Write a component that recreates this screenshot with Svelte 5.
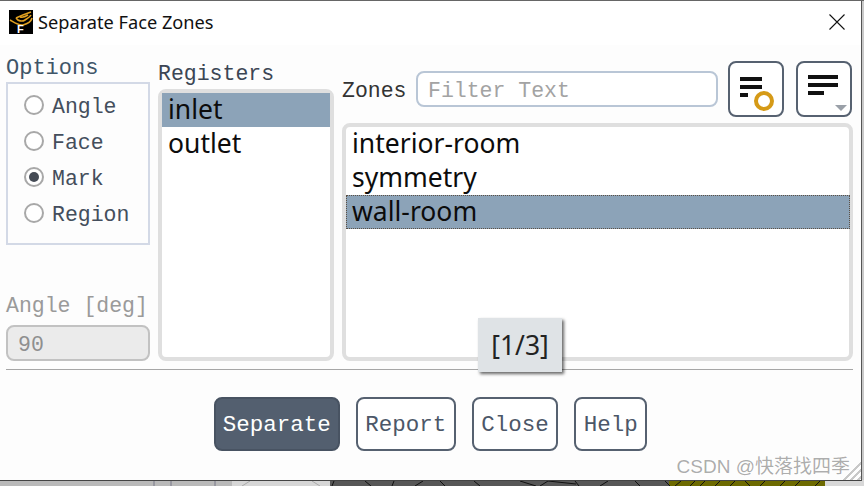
<script lang="ts">
  const modes = ["Angle", "Face", "Mark", "Region"];
  const registers = ["inlet", "outlet"];
  const zones = ["interior-room", "symmetry", "wall-room"];
  const buttons = ["Separate", "Report", "Close", "Help"];
  let mode = $state("Mark");
</script>

<div class="desk">
  <svg class="mesh" width="864" height="486" viewBox="0 0 864 486" aria-hidden="true">
    <rect y="0" width="864" height="1" fill="#666" />
    <rect x="0" y="480" width="232" height="6" fill="#b9b9b9" />
    <rect x="232" y="480" width="98" height="6" fill="#d6d6d6" />
    <rect x="330" y="480" width="339" height="6" fill="#575757" />
    <rect x="669" y="480" width="156" height="6" fill="#6d6a00" />
    <rect x="825" y="480" width="39" height="6" fill="#d8d8d8" />
    <path d="M154 481v5M171 481v5M215 481v5" stroke="#778" fill="none" />
    <path d="M250 481l-8 5M312 481l8 5" stroke="#aaa" fill="none" />
    <path d="M332 486l2-5M365 481l6 5M392 486l2-5M415 486l8-5M440 481l5 5M480 486l-6-5M520 481l16 5M540 486l8-5M548 481l28 3M575 481l4 5M600 486l8-5M640 486l-5-5M665 481l5 5M675 486l6-5M690 486l5-5M700 486l5-5M715 486l5-5M730 486l5-5M745 481l5 5M760 486l5-5M780 486l5-5M795 486l5-5M815 486l5-5" stroke="#111" fill="none" />
  </svg>

  <section class="win">
    <header class="title">
      <svg class="logo" width="24" height="24" viewBox="0 0 24 24" aria-hidden="true">
        <rect width="24" height="24" fill="#000" />
        <path d="M1 10c5 3 9 6 13 5s8-3 9-7M7 8c4-2 9-4 15-6M7 8c2 3 6 4 9 2s5-3 6-5M11 7c3 1 5 0 8-2" stroke="#e0a020" stroke-width="1.6" fill="none" />
        <text x="8" y="23" class="logo-f">F</text>
      </svg>
      <span>Separate Face Zones</span>
      <svg class="x" width="16" height="16" viewBox="0 0 16 16" aria-hidden="true">
        <path d="M.5.5l15 15M15.5.5l-15 15" stroke="#111" stroke-width="1.1" />
      </svg>
    </header>

    <div class="body">
      <div class="cols">
        <div class="col-options">
          <div class="lbl options-lbl">Options</div>
          <div class="group">
            {#each modes as m}
              <label class="radio">
                <span class="dot" class:on={mode === m}></span>
                <input type="radio" bind:group={mode} value={m} />
                <span class="radio-text">{m}</span>
              </label>
            {/each}
          </div>
          <div class="lbl muted angle-lbl">Angle [deg]</div>
          <div class="angle-input">90</div>
        </div>

        <div class="col-registers">
          <div class="lbl">Registers</div>
          <ul class="list">
            {#each registers as r, i}
              <li class:sel={i === 0}>{r}</li>
            {/each}
          </ul>
        </div>

        <div class="col-zones">
          <div class="zones-head">
            <span class="lbl">Zones</span>
            <div class="filter">Filter Text</div>
            <button class="icon-btn first" aria-label="Select zones">
              <svg width="36" height="36" viewBox="0 0 36 36" aria-hidden="true">
                <path d="M1 2h22v4H1zM1 10h22v4H1zM1 18h8v4H1z" fill="#111" />
                <circle cx="25" cy="26" r="8" fill="none" stroke="#d59a17" stroke-width="4" />
              </svg>
            </button>
            <button class="icon-btn" aria-label="Sort zones">
              <svg width="42" height="40" viewBox="0 0 42 40" aria-hidden="true">
                <path d="M1 2h30v4H1zM1 10h30v4H1zM1 18h16v4H1z" fill="#111" />
                <path d="M28 32h12l-6 6z" fill="#9aa0a8" />
              </svg>
            </button>
          </div>
          <ul class="list zones">
            {#each zones as z, i}
              <li class:sel={i === 2} class:focus={i === 2}>{z}</li>
            {/each}
          </ul>
        </div>
      </div>

      <hr />

      <div class="actions">
        {#each buttons as b, i}
          <button class="btn" class:primary={i === 0}>{b}</button>
        {/each}
      </div>

      <div class="tip">[1/3]</div>
      <div class="mark">CSDN @快落找四季</div>
      <div class="grip"></div>
    </div>
  </section>
</div>

<style>
  :global(body) {
    margin: 0;
    background: #8a8a8a;
  }

  .desk {
    position: relative;
    width: 864px;
    height: 486px;
    overflow: hidden;
    background: #c9c9c9;
    padding-top: 1px;
    box-sizing: border-box;
  }

  .mesh {
    position: absolute;
    inset: 0;
  }

  .win {
    position: relative;
    width: 862px;
    height: 480px;
    background: #fdfdfd;
    display: flex;
    flex-direction: column;
    border-right: 1px solid #555;
    border-bottom: 1px solid #444;
    box-sizing: border-box;
  }

  .title {
    height: 44px;
    flex: none;
    display: flex;
    align-items: center;
    gap: 5px;
    padding: 0 16px 3px 9px;
    background: #fff;
    font: 18.200px "Noto Sans", "Open Sans", sans-serif;
    color: #111;
    box-sizing: border-box;
  }

  .logo-f {
    font: bold 11px "Liberation Sans", sans-serif;
    fill: #fff;
  }

  .x {
    margin-left: auto;
  }

  .body {
    position: relative;
    flex: 1;
    display: flex;
    flex-direction: column;
    padding: 0 8px 0 6px;
  }

  .cols {
    display: flex;
    gap: 8px;
    height: 316px;
    flex: none;
  }

  .lbl {
    font: 21.500px/28px "Liberation Mono", monospace;
    color: #3c4654;
    white-space: nowrap;
  }

  .muted {
    color: #9a9a9a;
  }

  .col-options {
    width: 144px;
    flex: none;
    display: flex;
    flex-direction: column;
  }

  .options-lbl {
    margin-top: 10px;
    font-size: 22px;
    color: #3f5568;
  }

  .group {
    height: 163px;
    flex: none;
    margin-top: -1px;
    border: 2px solid #d3d9e6;
    box-sizing: border-box;
    padding: 3px 0 0 16px;
    display: flex;
    flex-direction: column;
  }

  .radio {
    height: 36px;
    display: flex;
    align-items: center;
    gap: 8px;
    font: 21.500px/32px "Liberation Mono", monospace;
    color: #444e5c;
  }

  .radio input {
    display: none;
  }

  .radio-text {
    padding-top: 4px;
  }

  .dot {
    width: 20px;
    height: 20px;
    border: 2px solid #a8a8a8;
    border-radius: 50%;
    box-sizing: border-box;
    background: #fff;
    display: grid;
    place-items: center;
  }

  .dot.on::after {
    content: "";
    width: 10px;
    height: 10px;
    border-radius: 50%;
    background: #454b55;
  }

  .angle-lbl {
    margin-top: 47px;
  }

  .angle-input {
    margin-top: 5px;
    height: 36px;
    flex: none;
    border: 2px solid #c2c2c2;
    border-radius: 8px;
    background: #ebebeb;
    box-sizing: border-box;
    padding-left: 10px;
    font: 21.500px/36px "Liberation Mono", monospace;
    color: #8f8f8f;
  }

  .col-registers {
    width: 176px;
    flex: none;
    display: flex;
    flex-direction: column;
  }

  .col-registers .lbl {
    margin-top: 15px;
  }

  .list {
    flex: 1;
    list-style: none;
    margin: 1px 0 0;
    padding: 0;
    border: 4px solid #dfdfdf;
    border-radius: 8px;
    background: #fff;
    font: 26.500px/33px "Noto Sans", "Open Sans", sans-serif;
    color: #0c0c0c;
    box-sizing: border-box;
  }

  .list li {
    height: 34px;
    padding-left: 6px;
  }

  .list li.sel {
    background: #8ca3b8;
  }

  .list li.focus {
    outline: 1px dotted #5c5044;
    outline-offset: -1px;
    margin-right: -1px;
  }

  .col-zones {
    flex: 1;
    display: flex;
    flex-direction: column;
  }

  .zones-head {
    height: 62px;
    flex: none;
    margin-top: 16px;
    display: flex;
    align-items: flex-start;
  }

  .zones-head .lbl {
    margin-top: 16px;
    width: 74px;
    flex: none;
    color: #333;
  }

  .filter {
    width: 302px;
    height: 36px;
    margin-top: 10px;
    border: 2px solid #b9c6d6;
    border-radius: 8px;
    box-sizing: border-box;
    padding-left: 10px;
    font: 21.500px/37px "Liberation Mono", monospace;
    color: #a3a3a3;
    background: #fff;
  }

  .icon-btn {
    width: 56px;
    height: 56px;
    margin: 0 0 0 12px;
    padding: 8px 0 0 9px;
    border: 2px solid #566170;
    border-radius: 8px;
    background: #fff;
    box-sizing: border-box;
    display: block;
    overflow: hidden;
  }

  .icon-btn svg {
    display: block;
  }

  .icon-btn.first {
    margin-left: 10px;
  }

  .zones {
    margin-top: 0;
  }

  hr {
    height: 1px;
    border: 0;
    margin: 8px 0 0;
    background: #a6a6a6;
    width: 847px;
    flex: none;
  }

  .actions {
    display: flex;
    justify-content: center;
    gap: 16px;
    margin-top: 27px;
    padding-left: 2px;
  }

  .btn {
    height: 54px;
    padding: 2px 7.500px 0;
    border: 2px solid #566170;
    border-radius: 8px;
    background: #fff;
    color: #4c5768;
    font: 22.500px "Liberation Mono", monospace;
  }

  .btn.primary {
    padding: 2px 7px 0;
    background: #535f6f;
    border-color: #485362;
    color: #fff;
  }

  .tip {
    position: absolute;
    left: 478px;
    top: 273px;
    width: 84px;
    height: 54px;
    background: #dfe3e6;
    box-shadow: 2px 2px 3px #0009;
    font: 26.500px/54px "Noto Sans", sans-serif;
    text-align: center;
    color: #222;
  }

  .mark {
    position: absolute;
    right: 11px;
    bottom: 2px;
    font: 19px "Liberation Sans", "Noto Sans CJK SC", sans-serif;
    color: #00000055;
    white-space: nowrap;
  }

  .grip {
    position: absolute;
    right: 0;
    bottom: 0;
    width: 20px;
    height: 20px;
    background: repeating-linear-gradient(135deg, #c8c8c8 0 2px, #fdfdfd 2px 5px);
    clip-path: polygon(100% 0, 100% 100%, 0 100%);
  }
</style>
